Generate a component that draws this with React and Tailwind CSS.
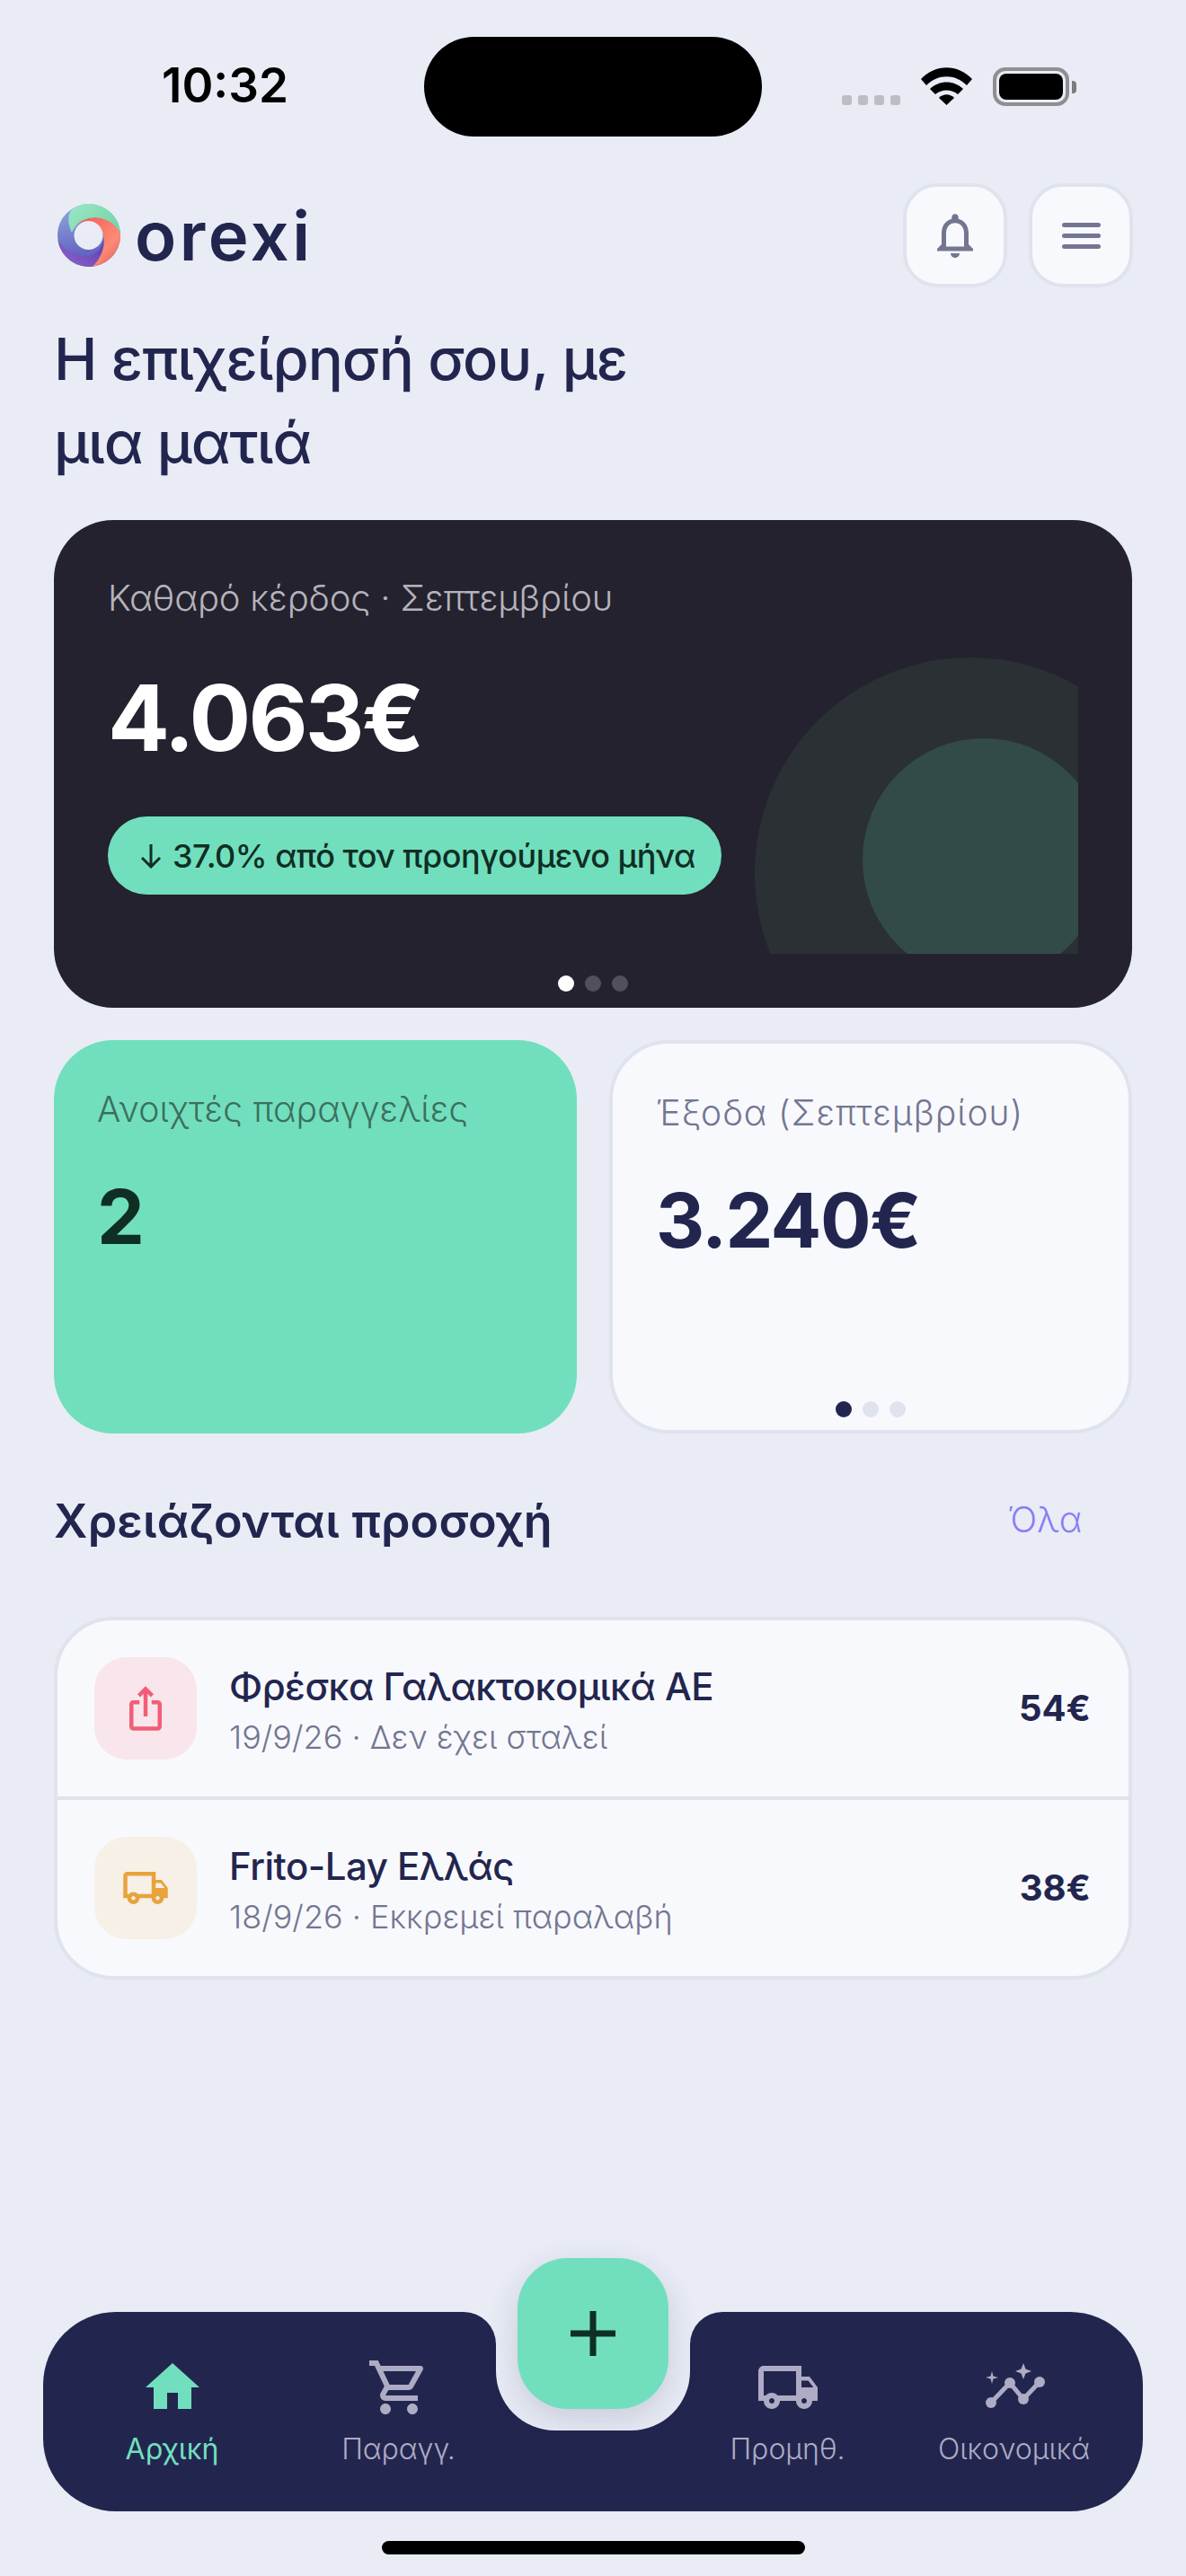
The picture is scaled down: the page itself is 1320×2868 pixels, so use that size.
import React from 'react';
import {
  MdHome,
  MdIosShare,
  MdOutlineLocalShipping,
  MdOutlineNotifications,
  MdOutlineShoppingCart,
} from 'react-icons/md';

const OrexiLogo = () => (
  <svg width="70" height="70" viewBox="0 0 70 70">
    <defs>
      <linearGradient id="blue" x1="0.3" y1="0" x2="0.4" y2="1">
        <stop offset="0" stopColor="#8fabdf" />
        <stop offset="1" stopColor="#5b52b8" />
      </linearGradient>
      <linearGradient id="green" x1="0" y1="0" x2="1" y2="0.6">
        <stop offset="0" stopColor="#9be8c5" />
        <stop offset="1" stopColor="#76d6aa" />
      </linearGradient>
      <linearGradient id="red" x1="0" y1="0" x2="1" y2="1">
        <stop offset="0" stopColor="#ec5a54" />
        <stop offset="0.65" stopColor="#ff8a75" />
        <stop offset="1" stopColor="#dc5c5c" />
      </linearGradient>
      <linearGradient id="purple" x1="1" y1="0" x2="0" y2="1">
        <stop offset="0" stopColor="#5a35ad" />
        <stop offset="1" stopColor="#8e67c9" />
      </linearGradient>
    </defs>
    <circle cx="35" cy="35" r="35" fill="url(#blue)" />
    <path d="M51 30C54 48 42 60 28 58C16 56 6 50 .4 40A35 35 0 0 0 40 69.6C48 60 54 46 51 30Z" fill="url(#purple)" />
    <path d="M16 32C10 20 12 10 17 5A35 35 0 0 1 70 33C62 18 44 12 30 18C22 22 18 27 16 32Z" fill="url(#green)" />
    <path d="M20 25C32 10 60 12 70 33A35 35 0 0 1 39 69.7C49 60 55 46 50 32C46 22 30 14 20 25Z" fill="url(#red)" />
    <circle cx="34.5" cy="35" r="16" fill="#e9ecf5" />
  </svg>
);

// stroke chart with two sparkles, the last tab of the bar
const ChartSparkIcon = () => (
  <svg width="72" height="72" viewBox="0 0 72 72" fill="currentColor">
    <path d="M10 53L31 31L46 49L64 30" fill="none" stroke="currentColor" strokeWidth="5" />
    <circle cx="10" cy="53" r="6" />
    <circle cx="31" cy="31" r="6" />
    <circle cx="46" cy="49" r="6" />
    <circle cx="64" cy="30" r="6" />
    <path d="M46 9L48.5 15.5L55 18L48.5 20.5L46 27L43.5 20.5L37 18L43.5 15.5Z" />
    <path d="M11 18L12.5 23.500L18 25L12.5 26.500L11 32L9.500 26.500L4 25L9.500 23.500Z" />
  </svg>
);

const Dots = ({ on, off }) => (
  <div className="flex justify-center gap-[12px]">
    <span className={`w-[18px] h-[18px] rounded-full ${on}`} />
    <span className={`w-[18px] h-[18px] rounded-full ${off}`} />
    <span className={`w-[18px] h-[18px] rounded-full ${off}`} />
  </div>
);

const StatusBar = () => (
  <div className="flex pt-[41px]">
    <div className="w-[472px] pl-[180px] pt-[21px] text-[53px] leading-[66px] font-semibold text-black">10:32</div>
    <div className="w-[376px] h-[111px] rounded-[56px] bg-black" />
    <div className="flex-1 flex items-start pl-[89px] pt-[34px]">
      <div className="flex gap-[7px] mt-[31px]">
        <span className="w-[11px] h-[11px] rounded-[3px] bg-[#bcbec4]" />
        <span className="w-[11px] h-[11px] rounded-[3px] bg-[#bcbec4]" />
        <span className="w-[11px] h-[11px] rounded-[3px] bg-[#bcbec4]" />
        <span className="w-[11px] h-[11px] rounded-[3px] bg-[#bcbec4]" />
      </div>
      <svg className="ml-[23px]" width="57" height="42" viewBox="0 0 57 42">
        <path d="M0 13C16 -4 41 -4 57 13L51 20C38 7 19 7 6 20Z" fill="#000" />
        <path d="M10 24C20 14 37 14 47 24L41 30C34 24 23 24 16 30Z" fill="#000" />
        <path d="M20 34C25 29 32 29 37 34L28.5 42Z" fill="#000" />
      </svg>
      <div className="ml-[23px] flex items-center">
        <div className="w-[85px] h-[43px] rounded-[14px] border-[4px] border-[#8e8e93] p-[3px]">
          <div className="w-full h-full rounded-[8px] bg-black" />
        </div>
        <div className="ml-[3px] w-[5px] h-[14px] rounded-r-[4px] bg-[#7c7c80]" />
      </div>
    </div>
  </div>
);

const AlertRow = ({ icon, tint, name, sub, price }) => (
  <div className="flex items-center pl-[41px] pr-[42px] py-[41px]">
    <div className={`w-[114px] h-[114px] rounded-[36px] flex items-center justify-center ${tint}`}>{icon}</div>
    <div className="ml-[36px] flex-1 pt-[4px]">
      <div className="text-[42px] leading-[56px] font-medium tracking-[-0.5px] text-[#22264f]">{name}</div>
      <div className="mt-[3px] text-[36px] leading-[50px] font-light text-[#737691]">{sub}</div>
    </div>
    <div className="text-[40px] leading-[56px] font-bold text-[#22264f]">{price}</div>
  </div>
);

const NavItem = ({ icon, label, active }) => (
  <div className={`w-[251px] flex flex-col items-center ${active ? 'text-[#71dfbd]' : 'text-[#aeabc4]'}`}>
    {icon}
    <span className={`mt-[11px] text-[32px] leading-[44px] ${active ? 'font-normal' : 'font-light'}`}>{label}</span>
  </div>
);

export default function App() {
  return (
    <div
      className="w-[1320px] h-[2868px] bg-[#e9ecf5] flex flex-col overflow-hidden"
      style={{ fontFamily: 'Inter, "Noto Sans", sans-serif' }}
    >
      <StatusBar />

      <div className="px-[60px] flex-1">
        <div className="mt-[52px] flex items-center justify-between h-[116px]">
          <div className="flex items-center pl-[4px]">
            <OrexiLogo />
            <span className="ml-[16px] text-[76px] leading-[80px] font-semibold tracking-[3.500px] text-[#22264f]">orexi</span>
          </div>
          <div className="flex gap-[24px] -mr-[1px]">
            <button className="w-[116px] h-[116px] rounded-[38px] border-[4px] border-[#dfe3ee] bg-[#f8f9fd] flex items-center justify-center text-[#737691]">
              <MdOutlineNotifications size={60} />
            </button>
            <button className="w-[116px] h-[116px] rounded-[38px] border-[4px] border-[#dfe3ee] bg-[#f8f9fd] flex flex-col items-center justify-center gap-[7px]">
              <span className="w-[43px] h-[5px] rounded-full bg-[#737691]" />
              <span className="w-[43px] h-[5px] rounded-full bg-[#737691]" />
              <span className="w-[43px] h-[5px] rounded-full bg-[#737691]" />
            </button>
          </div>
        </div>

        <h1 className="mt-[33px] text-[65px] leading-[93px] font-medium tracking-[-1px] text-[#22264f] w-[760px]">
          Η επιχείρησή σου, με<br />μια ματιά
        </h1>

        <div className="relative mt-[40px] h-[543px] rounded-[66px] bg-[#24222e] px-[60px] pt-[57px] overflow-hidden">
          <div className="absolute right-[60px] bottom-[60px] w-[360px] h-[330px] overflow-hidden">
            <div className="absolute left-0 top-0 w-[480px] h-[480px] rounded-full bg-[#2a3033]" />
            <div className="absolute left-[120px] top-[90px] w-[270px] h-[270px] rounded-full bg-[#334b48]" />
          </div>
          <div className="relative text-[40px] leading-[60px] font-light tracking-[-0.2px] text-[#b5b3bb]">Καθαρό κέρδος · Σεπτεμβρίου</div>
          <div className="relative mt-[52px] text-[102px] leading-[102px] font-bold tracking-[-3px] text-white">4.063€</div>
          <div className="relative mt-[59px] w-[683px] h-[87px] rounded-full bg-[#71dfbd] pl-[36px] flex items-center text-[36px] font-medium tracking-[-0.5px] text-[#0f2e24]">
            <svg width="24" height="28" viewBox="0 0 24 28" fill="none" stroke="#0f2e24" strokeWidth="3">
              <path d="M12 1V26M2 16L12 26L22 16" />
            </svg>
            <span className="ml-[12px]">37.0% από τον προηγούμενο μήνα</span>
          </div>
          <div className="relative mt-[90px]">
            <Dots on="bg-white" off="bg-[#52505b]" />
          </div>
        </div>

        <div className="mt-[36px] grid grid-cols-2 gap-[36px] h-[438px]">
          <div className="rounded-[66px] bg-[#71dfbd] px-[48px] pt-[48px]">
            <div className="text-[39px] leading-[57px] font-light tracking-[0.2px] text-[#3c6f5e]">Ανοιχτές παραγγελίες</div>
            <div className="mt-[50px] text-[84px] leading-[84px] font-bold text-[#0f2e24]">2</div>
          </div>
          <div className="rounded-[66px] bg-[#f8f9fd] border-[4px] border-[#dfe3ee] px-[48px] pt-[48px] pb-[14px] flex flex-col">
            <div className="text-[39px] leading-[57px] font-light tracking-[1px] text-[#737691]">Έξοδα (Σεπτεμβρίου)</div>
            <div className="mt-[50px] text-[84px] leading-[84px] font-bold tracking-[-1.500px] text-[#22264f]">3.240€</div>
            <div className="mt-auto">
              <Dots on="bg-[#22264f]" off="bg-[#dfe3ee]" />
            </div>
          </div>
        </div>

        <div className="mt-[62px] flex items-start justify-between h-[72px]">
          <h2 className="text-[52px] leading-[72px] font-semibold tracking-[0.2px] text-[#22264f]">Χρειάζονται προσοχή</h2>
          <span className="mr-[56px] text-[39px] leading-[68px] font-light text-[#8b7cf6]">Όλα</span>
        </div>

        <div className="mt-[70px] rounded-[66px] bg-[#f8f9fd] border-[4px] border-[#dfe3ee] divide-y-[4px] divide-[#dfe3ee] overflow-hidden">
          <AlertRow
            icon={<MdIosShare size={54} className="text-[#f35d76]" />}
            tint="bg-[#f8e6ec]"
            name="Φρέσκα Γαλακτοκομικά ΑΕ"
            sub="19/9/26 · Δεν έχει σταλεί"
            price="54€"
          />
          <AlertRow
            icon={<MdOutlineLocalShipping size={54} className="text-[#e8a33d]" />}
            tint="bg-[#f6f0e6]"
            name="Frito-Lay Ελλάς"
            sub="18/9/26 · Εκκρεμεί παραλαβή"
            price="38€"
          />
        </div>
      </div>

      <div className="relative mx-[48px] h-[222px] rounded-[81px] bg-[#22264f] px-[18px] pt-[48px] flex justify-between">
        <NavItem active icon={<MdHome size={72} />} label="Αρχική" />
        <NavItem icon={<MdOutlineShoppingCart size={72} />} label="Παραγγ." />
        <div className="w-[180px]" />
        <NavItem icon={<MdOutlineLocalShipping size={72} />} label="Προμηθ." />
        <NavItem icon={<ChartSparkIcon />} label="Οικονομικά" />

        {/* notch cut out of the bar, the two small pieces round its top corners */}
        <div className="absolute left-[504px] top-0 w-[216px] h-[132px] rounded-b-[66px] bg-[#e9ecf5]" />
        <div className="absolute left-[468px] top-0 w-[36px] h-[36px] bg-[#e9ecf5]">
          <div className="w-full h-full rounded-tr-[36px] bg-[#22264f]" />
        </div>
        <div className="absolute left-[720px] top-0 w-[36px] h-[36px] bg-[#e9ecf5]">
          <div className="w-full h-full rounded-tl-[36px] bg-[#22264f]" />
        </div>
        <button className="absolute left-[528px] -top-[60px] w-[168px] h-[168px] rounded-[56px] bg-[#71dfbd] shadow-[0_12px_36px_rgba(34,38,79,0.16)] flex items-center justify-center">
          <svg width="50" height="50" viewBox="0 0 50 50">
            <path d="M21.500 0h7v21.500H50v7H28.500V50h-7V28.500H0v-7h21.500z" fill="#0f2e24" />
          </svg>
        </button>
      </div>

      <div className="mt-[33px] mb-[24px] mx-auto w-[471px] h-[15px] rounded-full bg-black" />
    </div>
  );
}
